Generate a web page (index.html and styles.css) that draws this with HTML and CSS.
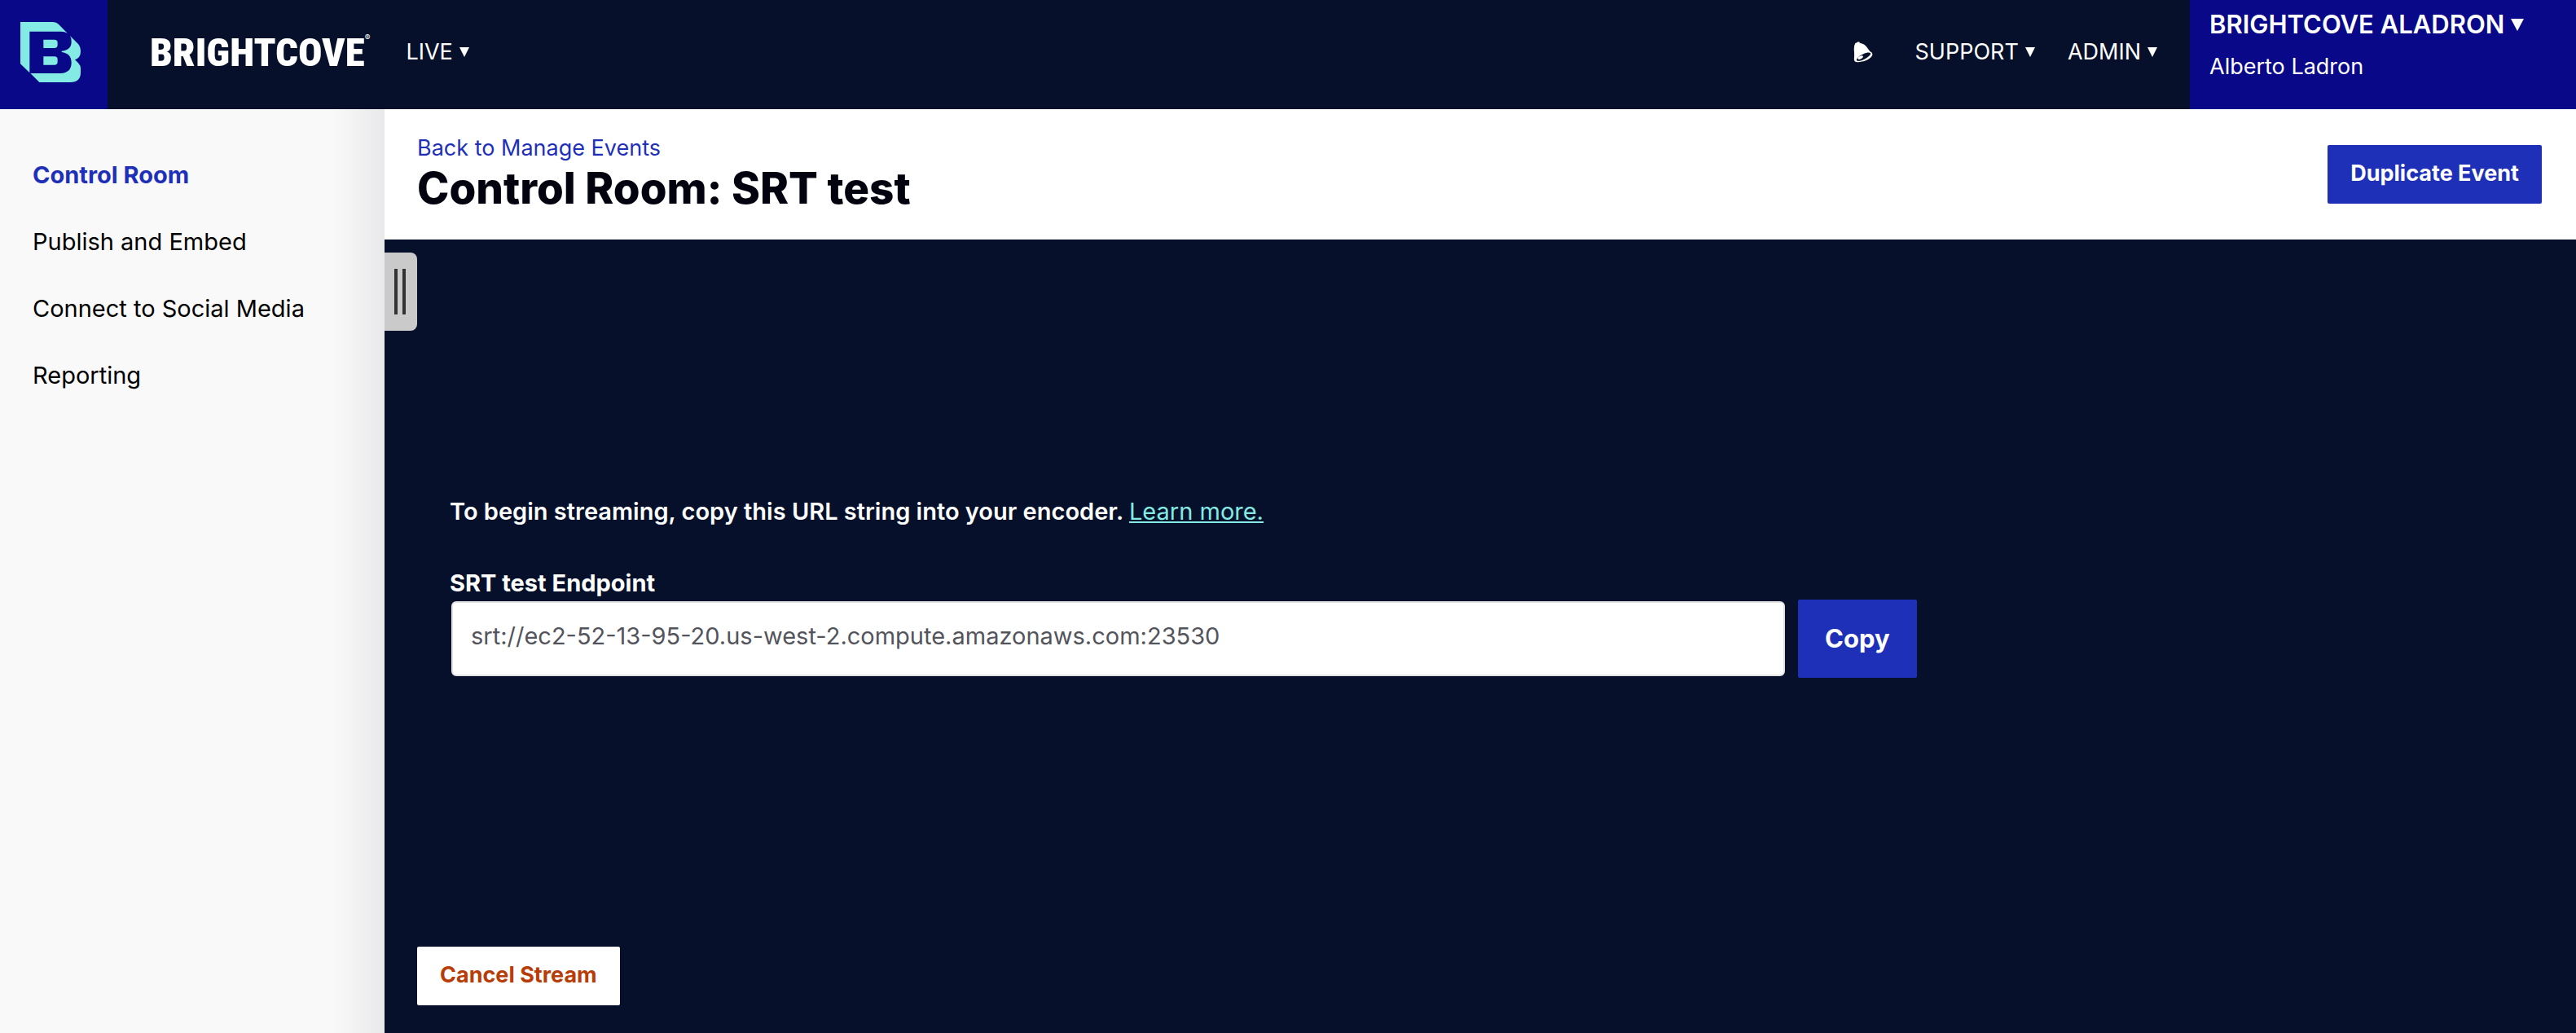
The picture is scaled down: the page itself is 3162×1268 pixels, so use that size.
FILE: index.html
```html
<!DOCTYPE html>
<html lang="en">
<head>
<meta charset="utf-8">
<title>Control Room: SRT test</title>
<link rel="stylesheet" href="styles.css">
</head>
<body>
<header class="topbar">
  <a class="mark" href="#" aria-label="Brightcove home">
    <svg class="mark-icon" viewBox="0 0 222 222" aria-hidden="true">
      <path d="M0 0H118Q132 0 142 10L173 41Q163 35 150 35H34V187L0 154Z"/>
      <path d="M37 189H148Q188 187 188 150Q188 116 152 111V107Q188 104 188 72Q188 58 183 51L213 81Q222 92 222 108Q222 132 201 139L213 151Q222 160 222 172V186Q222 222 184 222H70Z"/>
      <path d="M85 65H125Q137 65 137 76V85Q137 96 125 96H85ZM85 127H125Q137 127 137 138V147Q137 158 125 158H85Z"/>
    </svg>
  </a>
  <a class="wordmark" href="#">BRIGHTCOVE<sup>®</sup></a>
  <nav class="nav" aria-label="Product">
    <button class="menu" type="button">LIVE<span class="caret"></span></button>
  </nav>
  <div class="tools">
    <button class="bell" type="button" aria-label="Notifications">
      <svg viewBox="48 36 67 74" aria-hidden="true">
        <path fill="#fff" d="M54 42Q60 40 64 37Q69 37 70 41Q84 43 93 54Q100 64 105 70Q114 74 114 80Q114 90 96 100Q75 110 56 107Q48 104 50 93Q51 85 50 70Q48 52 54 42Z"/>
        <ellipse fill="#06102b" cx="83" cy="89" rx="27" ry="9" transform="rotate(-27 83 89)"/>
        <ellipse fill="#fff" cx="72" cy="92" rx="10" ry="5" transform="rotate(-27 72 92)"/>
      </svg>
    </button>
    <button class="menu" type="button">SUPPORT<span class="caret"></span></button>
    <button class="menu" type="button">ADMIN<span class="caret"></span></button>
  </div>
  <div class="account">
    <button class="account-name" type="button">BRIGHTCOVE ALADRON<span class="caret"></span></button>
    <span class="account-user">Alberto Ladron</span>
  </div>
</header>
<div class="layout">
  <nav class="sidebar" aria-label="Event">
    <a class="side-link current" href="#">Control Room</a>
    <a class="side-link" href="#">Publish and Embed</a>
    <a class="side-link" href="#">Connect to Social Media</a>
    <a class="side-link" href="#">Reporting</a>
  </nav>
  <main class="content">
    <div class="page-head">
      <div>
        <a class="back" href="#">Back to Manage Events</a>
        <h1 class="title">Control Room: SRT test</h1>
      </div>
      <button class="button" type="button">Duplicate Event</button>
    </div>
    <section class="stage">
      <button class="handle" type="button" aria-label="Collapse menu"></button>
      <div class="setup">
        <p class="hint">To begin streaming, copy this URL string into your encoder. <a class="learn" href="#">Learn more.</a></p>
        <label class="label" for="endpoint">SRT test Endpoint</label>
        <div class="field">
          <input class="input" id="endpoint" type="text" readonly value="srt://ec2-52-13-95-20.us-west-2.compute.amazonaws.com:23530">
          <button class="button copy" type="button">Copy</button>
        </div>
      </div>
      <button class="button cancel" type="button">Cancel Stream</button>
    </section>
  </main>
</div>
</body>
</html>
```
FILE: styles.css
```css
* { box-sizing: border-box; }
body {
  margin: 0;
  min-height: 100vh;
  display: flex;
  flex-direction: column;
  font-family: Inter, "Liberation Sans", sans-serif;
  font-size: 27px;
  line-height: 36px;
  color: #000;
  background: #f9f9f9;
}
a { color: inherit; text-decoration: none; }
button { font: inherit; color: inherit; border: 0; background: none; padding: 0; cursor: pointer; }

.topbar {
  display: flex;
  align-items: stretch;
  height: 134px;
  color: #fff;
  background: #06102b;
}
.mark { width: 132px; padding: 27px 25px; background: #080889; }
.mark-icon { display: block; width: 74px; height: 74px; fill: #84ebe4; }
.wordmark {
  display: flex;
  padding: 0 0 6px 52px;
  align-items: center;
  font: 900 49px "Liberation Sans Narrow", "Roboto Condensed", sans-serif;
}
.wordmark sup { font: 10px Inter, sans-serif; align-self: flex-start; margin-top: 40px; }
.nav, .tools { display: flex; align-items: center; padding-bottom: 6px; }
.nav { padding-left: 44px; }
.tools { margin-left: auto; padding-right: 40px; gap: 40px; }
.menu, .account-name { display: flex; align-items: center; gap: 8px; }
.caret { border: 6px solid transparent; border-top: 12px solid #fff; border-bottom: 0; }
.bell { margin-right: 12px; width: 24px; height: 26px; }
.bell svg { display: block; width: 24px; height: 26px; }
.account {
  width: 474px;
  padding: 12px 24px;
  display: flex;
  flex-direction: column;
  align-items: flex-start;
  gap: 16px;
  background: #080889;
}
.account-name { font-size: 31px; font-weight: 600; }
.account-name .caret { border-width: 15px 8px 0; }

.layout { flex: 1; display: flex; }
.sidebar {
  width: 472px;
  padding: 63px 40px;
  display: flex;
  flex-direction: column;
  gap: 46px;
  font-size: 29px;
  background: linear-gradient(to left, #e9e9eb, #f9f9f9 64px);
}
.current { font-weight: 700; color: #1f30b8; }
.content { flex: 1; display: flex; flex-direction: column; }
.page-head {
  height: 160px;
  padding: 30px 42px 0 40px;
  display: flex;
  justify-content: space-between;
  background: #fff;
}
.back { display: block; color: #1f30b8; }
.title { margin: 0; font-size: 53px; line-height: 62px; font-weight: 800; color: #03030f; }
.button {
  height: 72px;
  padding: 0 28px 2px;
  border-radius: 2px;
  font-weight: 700;
  color: #fff;
  background: #1f30b8;
}
.page-head .button { margin-top: 14px; }
.stage {
  position: relative;
  flex: 1;
  display: flex;
  flex-direction: column;
  align-items: flex-start;
  justify-content: space-between;
  padding: 316px 40px 34px;
  color: #fff;
  background: #06102b;
}
.handle {
  position: absolute;
  left: 0;
  top: 16px;
  width: 40px;
  height: 96px;
  padding: 20px 14px 20px 12px;
  border-radius: 0 8px 8px 0;
  background: #cacaca;
}
.handle::before {
  content: "";
  display: block;
  height: 56px;
  border: solid #333;
  border-width: 0 4px;
}
.setup { width: 69%; margin-left: 40px; font-size: 29px; }
.hint { margin: 0 0 52px; font-weight: 600; }
.learn { font-weight: 400; color: #84ebe4; text-decoration: underline; }
.label { display: block; margin-bottom: 2px; font-weight: 700; }
.field { display: flex; align-items: center; gap: 16px; padding-left: 2px; }
.input {
  flex: 1;
  height: 92px;
  padding: 0 22px 8px;
  border: 2px solid #e2e2e2;
  border-radius: 6px;
  font: inherit;
  color: #53545c;
  background: #fff;
}
.copy { width: 146px; height: 96px; padding-bottom: 0; font-size: 31px; }
.cancel { color: #b83c08; background: #fff; }
```
